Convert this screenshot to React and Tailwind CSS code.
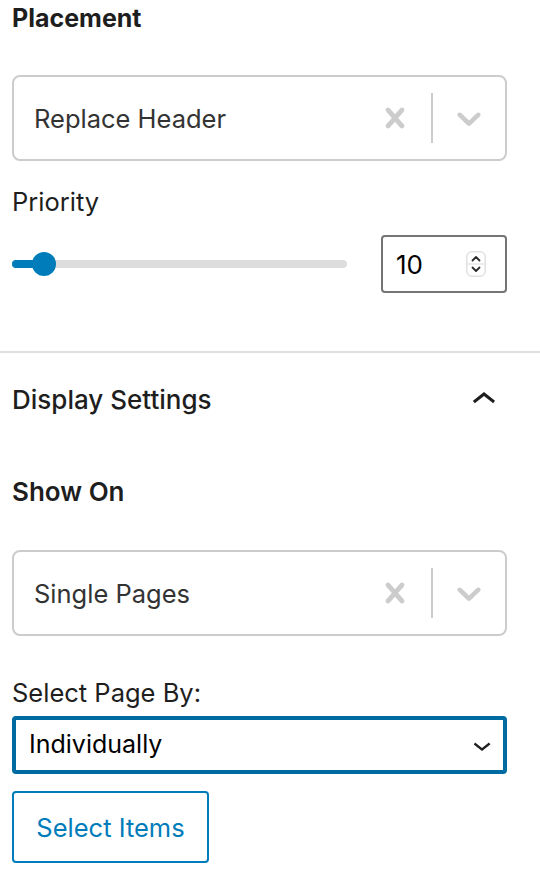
import React from 'react';

// react-select style indicators, drawn at 2x
const ClearIcon = () => (
  <svg viewBox="0 0 20 20" width="40" height="40" fill="#cccccc" aria-hidden="true">
    <path d="M14.348 14.849c-0.469 0.469-1.229 0.469-1.697 0l-2.651-3.030-2.651 3.029c-0.469 0.469-1.229 0.469-1.697 0-0.469-0.469-0.469-1.229 0-1.697l2.758-3.15-2.759-3.152c-0.469-0.469-0.469-1.228 0-1.697s1.228-0.469 1.697 0l2.652 3.031 2.651-3.031c0.469-0.469 1.228-0.469 1.697 0s0.469 1.229 0 1.697l-2.758 3.152 2.758 3.15c0.469 0.469 0.469 1.229 0 1.698z" />
  </svg>
);

const DropdownIcon = () => (
  <svg viewBox="0 0 20 20" width="40" height="40" fill="#cccccc" aria-hidden="true">
    <path d="M4.516 7.548c0.436-0.446 1.043-0.481 1.576 0l3.908 3.747 3.908-3.747c0.533-0.481 1.141-0.446 1.574 0 0.436 0.445 0.408 1.197 0 1.615-0.406 0.418-4.695 4.502-4.695 4.502-0.217 0.223-0.502 0.335-0.787 0.335s-0.57-0.112-0.789-0.335c0 0-4.287-4.084-4.695-4.502s-0.436-1.17 0-1.615z" />
  </svg>
);

const ChevronUp = () => (
  <svg viewBox="0 0 24 24" width="48" height="48" fill="#1e1e1e" aria-hidden="true">
    <path d="M6.5 12.4L12 8l5.5 4.4-.9 1.2L12 10l-4.6 3.6-1-1.2z" />
  </svg>
);

const ChevronDown = () => (
  <svg viewBox="0 0 24 24" width="36" height="36" fill="#1e1e1e" aria-hidden="true">
    <path d="M17.5 11.6L12 16l-5.5-4.4.9-1.2L12 14l4.6-3.6 1 1.2z" />
  </svg>
);

const Spinner = () => (
  <svg viewBox="0 0 20 26" width="20" height="26" aria-hidden="true">
    <rect x="0.75" y="0.75" width="18.5" height="24.5" rx="5" fill="#ffffff" stroke="#e2e2e2" strokeWidth="1.5" />
    <line x1="1" y1="13" x2="19" y2="13" stroke="#e2e2e2" strokeWidth="1.2" />
    <path d="M6.5 9.5L10 6l3.5 3.5" fill="none" stroke="#2c2c2c" strokeWidth="1.8" strokeLinecap="round" strokeLinejoin="round" />
    <path d="M6.5 16.5L10 20l3.5-3.5" fill="none" stroke="#2c2c2c" strokeWidth="1.8" strokeLinecap="round" strokeLinejoin="round" />
  </svg>
);

function ReactSelect({ value, className = '' }) {
  return (
    <div className={`flex h-[86px] items-center rounded-[8px] border-2 border-[#cccccc] bg-white ${className}`}>
      <div className="flex-1 pl-[20px] pt-[3px] text-[25.5px] text-[#333333]">{value}</div>
      <div className="flex h-full items-center">
        <div className="p-[16px]"><ClearIcon /></div>
        <div className="h-[50px] w-[2px] bg-[#cccccc]" />
        <div className="p-[16px]"><DropdownIcon /></div>
      </div>
    </div>
  );
}

export default function App() {
  const priority = 10;
  const thumbLeft = 20;

  return (
    <div className="min-h-screen w-[540px] bg-white text-[#1e1e1e] font-['Inter','Liberation_Sans',sans-serif]">
      {/* Placement */}
      <div className="pl-[12px] pr-[33px]">
        <h2 className="text-[25px] font-bold leading-[36px]">Placement</h2>
        <ReactSelect value="Replace Header" className="mt-[39px]" />

        <div className="mt-[23px] text-[25.5px] leading-[36px]">Priority</div>
        <div className="mt-[15px] flex h-[58px] items-center">
          <div className="relative mr-[34px] flex h-[24px] flex-1 items-center">
            <div className="h-[8px] w-full rounded-full bg-[#dddddd]" />
            <div className="absolute left-0 h-[8px] w-[32px] rounded-full bg-[#007cba]" />
            <div className="absolute h-[24px] w-[24px] rounded-full bg-[#007cba]" style={{ left: thumbLeft }} />
          </div>
          <div className="flex h-[58px] w-[126px] items-center rounded-[4px] border-2 border-[#757575] pl-[13px] pr-[19px]">
            <span className="flex-1 text-[26px] text-black">{priority}</span>
            <Spinner />
          </div>
        </div>
      </div>

      <div className="mt-[58px] h-[2px] bg-[#e0e0e0]" />

      {/* Display Settings */}
      <div className="pl-[12px] pr-[32px]">
        <div className="mt-[23px] flex h-[48px] items-center justify-between">
          <span className="text-[26px] font-medium leading-[40px]">Display Settings</span>
          <ChevronUp />
        </div>
      </div>

      <div className="pl-[12px] pr-[33px]">
        <h3 className="mt-[48px] text-[26px] font-semibold leading-[40px]">Show On</h3>
        <ReactSelect value="Single Pages" className="mt-[38px]" />

        <div className="mt-[39px] text-[25.5px] leading-[36px]">Select Page By:</div>
        <div className="mt-[5px] flex h-[58px] items-center rounded-[4px] border-4 border-[#006ba1] pl-[13px] pr-[3px]">
          <span className="flex-1 text-[25px] text-black">Individually</span>
          <ChevronDown />
        </div>

        <button className="mt-[17px] flex h-[72px] w-[197px] items-center justify-center rounded-[4px] border-2 border-[#007cba] bg-white pt-[3px] text-[25.5px] text-[#007cba]">
          Select Items
        </button>
      </div>
    </div>
  );
}
